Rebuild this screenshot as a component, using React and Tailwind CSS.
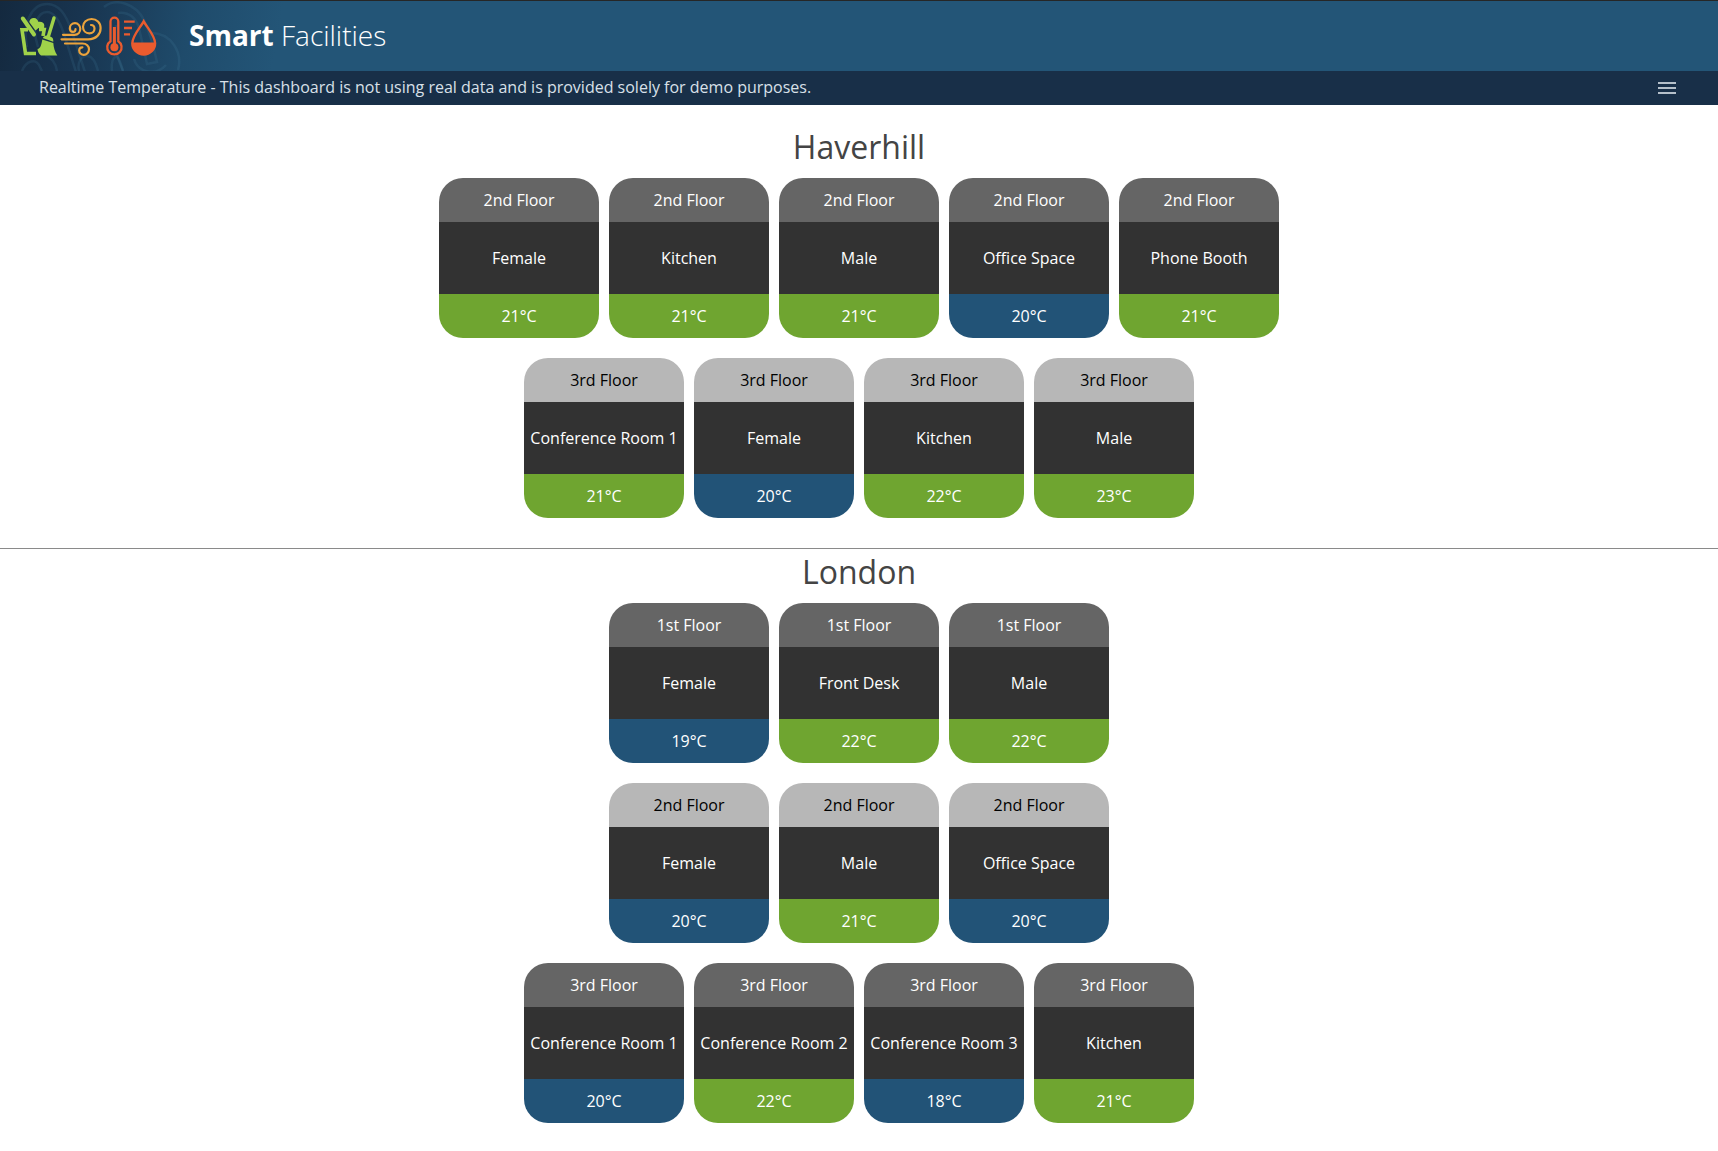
const G = "green";
const B = "blue";

const sites = [
  {
    name: "Haverhill",
    floors: [
      { label: "2nd Floor", rooms: [["Female", 21, G], ["Kitchen", 21, G], ["Male", 21, G], ["Office Space", 20, B], ["Phone Booth", 21, G]] },
      { label: "3rd Floor", rooms: [["Conference Room 1", 21, G], ["Female", 20, B], ["Kitchen", 22, G], ["Male", 23, G]] },
    ],
  },
  {
    name: "London",
    floors: [
      { label: "1st Floor", rooms: [["Female", 19, B], ["Front Desk", 22, G], ["Male", 22, G]] },
      { label: "2nd Floor", rooms: [["Female", 20, B], ["Male", 21, G], ["Office Space", 20, B]] },
      { label: "3rd Floor", rooms: [["Conference Room 1", 20, B], ["Conference Room 2", 22, G], ["Conference Room 3", 18, B], ["Kitchen", 21, G]] },
    ],
  },
];

const levelStyles = { green: "bg-[#6fa530]", blue: "bg-[#225377]" };

function LogoArt() {
  return (
    <svg width="189" height="70" viewBox="0 0 189 70" fill="none" aria-hidden="true">
      {/* faint line pattern */}
      <g stroke="#4a86a8" strokeOpacity="0.16" strokeWidth="2.500">
        <path d="M27 46C22 22 32 3 47 3c12 0 19 10 25 28l13 40" />
        <path d="M38 46C31 25 38 11 47 11c8 0 13 10 17 22l12 38" />
        <path d="M104 6c12-10 32-3 40 13 6 13 10 28 13 42l-10 2-8-36c-4-12-12-16-21-15" />
        <path d="M116 24c-4 14 0 30 7 46" />
        <path d="M151 32c20 0 32 19 27 37M134 58c4 14 22 17 32 6" />
        <path d="M22 70c4-10 14-14 18-4l2 4M45 54c6 2 11 8 12 16M79 70c-2-8 2-15 8-15s9 7 11 15M112 70c-1-8 1-14 4-14s5 7 7 14" />
      </g>
      {/* bin and broom */}
      <g stroke="#a0d24a">
        <path d="M22.800 17.500L34 33.500" strokeWidth="4" strokeLinecap="round" />
        <path d="M28 28.800H22L25.500 52.500H36" strokeWidth="3.600" />
        <path d="M39 28.500h5.200l-1.200 6.500" strokeWidth="3.600" />
        <path d="M54 17L48.500 35" strokeWidth="3.400" strokeLinecap="round" />
      </g>
      <g fill="#a0d24a">
        <path d="M29.200 21c.5-2.800 2.600-4.200 4.900-3.900 2.200.2 3.600 1.600 4.200 3.700 3.400-.6 5.900.8 6 3.500l-.2 2.700H38.500L35.500 29.500z" />
        <path d="M47.200 34.500l3.600 1.200c2 .8 2.700 2.500 2.500 5l-10.600-3.700c1.200-2 2.700-2.900 4.500-2.500z" />
        <path d="M42.300 38.500l11 3.600c.3 4.500 1.500 8.400 4 12.400H41c-2-1.500-3.200-3.500-3.500-6.400 3-.6 4-4.500 4.800-9.600z" />
      </g>
      {/* wind */}
      <g stroke="#eba33c" strokeWidth="2.200" strokeLinecap="round" strokeLinejoin="round">
        <path d="M61.500 38.300H88c8.500 0 12.600-5.300 12.600-11.300 0-5.500-4-9-9-9s-8.600 3.500-8.600 7.800c0 4 2.800 6.600 6.300 6.600 3.300 0 5.200-2.200 5.200-4.600 0-2.300-1.500-3.800-3.500-3.800" />
        <path d="M63 33.800h11.500c3.700 0 5.800-3 5.800-6s-2.300-5.600-5.300-5.600-5.200 2.300-5.200 5 1.700 3.600 3.200 3.600 2.500-1.200 2.500-2.600" />
        <path d="M65 42.500h17.500c4 0 6.500 2.800 6.500 5.800s-2.500 5.500-5.200 5.500-4.600-2-4.600-4.200 1.500-3.300 3.200-3.300" />
      </g>
      {/* thermometer */}
      <g stroke="#ea5b2e" strokeWidth="2.300">
        <path d="M110.500 40.200V20.500a3.900 3.900 0 0 1 7.800 0V40.200a7.200 7.200 0 1 1-7.800 0z" />
        <circle cx="114.400" cy="46.300" r="4" fill="#ea5b2e" stroke="none" />
        <path d="M114.400 26v19" strokeWidth="3" />
        <path d="M124 20.700h10.700M124 27h8M124 33.300h6" />
      </g>
      {/* humidity drop */}
      <path d="M143.700 20.300C140 27 132.300 35 132.300 42.200a11.400 11.400 0 0 0 22.800 0c0-7.200-7.700-15.200-11.400-21.900z" stroke="#ea5b2e" strokeWidth="2.400" />
      <path d="M132 41.500h23.400a11.700 12.500 0 0 1-23.400 0z" fill="#ea5b2e" />
    </svg>
  );
}

function RoomCard({ floor, room, temp, level, light }) {
  return (
    <li className="w-40 overflow-hidden rounded-3xl text-center whitespace-nowrap text-white">
      <div className={light ? "bg-[#b7b7b7] py-2.5 text-black" : "bg-[#656565] py-2.5"}>{floor}</div>
      <div className="bg-[#323232] py-6">{room}</div>
      <div className={levelStyles[level] + " py-2.5"}>{temp}°C</div>
    </li>
  );
}

export default function App() {
  return (
    <div className="min-h-screen bg-white font-['Open_Sans',sans-serif] text-base">
      <header className="border-t border-[#262626]">
        <div className="flex items-center bg-[#235577] bg-[linear-gradient(100deg,#14293f_0px,#18344f_80px,#1f4b6b_190px,#235577_280px)]">
          <LogoArt />
          <h1 className="pb-0.5 text-[28px] leading-9 font-light text-white">
            <strong className="font-bold">Smart</strong> Facilities
          </h1>
        </div>
        <div className="flex items-center justify-between bg-[#182f48] pr-[42px] pl-[39px] text-[#d9e0e8]">
          <p className="pt-1 pb-1.5">Realtime Temperature - This dashboard is not using real data and is provided solely for demo purposes.</p>
          <button type="button" aria-label="Menu" className="flex w-[18px] flex-col gap-[3px]">
            <span className="h-0.5 bg-[#b5c0ca]" />
            <span className="h-0.5 bg-[#b5c0ca]" />
            <span className="h-0.5 bg-[#b5c0ca]" />
          </button>
        </div>
      </header>
      <main className="pt-[19px]">
        {sites.map((site, s) => (
          <section key={site.name} className={s > 0 ? "border-t border-[#8a8a8a]" : "pb-[30px]"}>
            <h2 className="pt-0.5 pb-2.5 text-center text-[32px] leading-[42px] text-[#444444]">{site.name}</h2>
            <div className="flex flex-col gap-5">
              {site.floors.map((f, i) => (
                <ul key={f.label} className="flex flex-wrap justify-center gap-2.5">
                  {f.rooms.map(([room, temp, level]) => (
                    <RoomCard key={room} floor={f.label} room={room} temp={temp} level={level} light={i % 2 === 1} />
                  ))}
                </ul>
              ))}
            </div>
          </section>
        ))}
      </main>
    </div>
  );
}
